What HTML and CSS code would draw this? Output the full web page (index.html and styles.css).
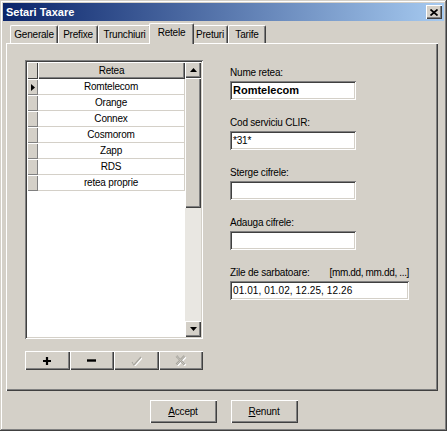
FILE: index.html
```html
<!DOCTYPE html>
<html>
<head>
<meta charset="utf-8">
<title>Setari Taxare</title>
<link rel="stylesheet" href="styles.css">
</head>
<body>
<div class="window">
  <div class="titlebar">
    <span class="title">Setari Taxare</span>
    <span class="close"><svg width="8" height="7" viewBox="0 0 8 7"><path d="M0.5 0.5 L7.5 6.5 M7.5 0.5 L0.5 6.5" stroke="#000" stroke-width="1.7" fill="none"/></svg></span>
  </div>
  <div class="tabs">
    <div class="tab w-gen">Generale</div>
    <div class="tab w-pre">Prefixe</div>
    <div class="tab w-tru">Trunchiuri</div>
    <div class="tab sel">Retele</div>
    <div class="tab w-prt">Preturi</div>
    <div class="tab w-tar">Tarife</div>
  </div>
  <div class="panel">
    <div class="leftcol">
      <div class="grid">
        <div class="gridbody">
          <div class="row header"><div class="ind"></div><div class="cell">Retea</div></div>
          <div class="row"><div class="ind"><svg width="4" height="7" viewBox="0 0 4 7"><polygon points="0,0 4,3.5 0,7" fill="#000"/></svg></div><div class="cell">Romtelecom</div></div>
          <div class="row"><div class="ind"></div><div class="cell">Orange</div></div>
          <div class="row"><div class="ind"></div><div class="cell">Connex</div></div>
          <div class="row"><div class="ind"></div><div class="cell">Cosmorom</div></div>
          <div class="row"><div class="ind"></div><div class="cell">Zapp</div></div>
          <div class="row"><div class="ind"></div><div class="cell">RDS</div></div>
          <div class="row"><div class="ind"></div><div class="cell">retea proprie</div></div>
        </div>
        <div class="scrollbar">
          <div class="sbtn"><svg width="7" height="4" viewBox="0 0 7 4"><polygon points="0,4 7,4 3.5,0" fill="#000"/></svg></div>
          <div class="thumb"></div>
          <div class="track"></div>
          <div class="sbtn"><svg width="7" height="4" viewBox="0 0 7 4"><polygon points="0,0 7,0 3.5,4" fill="#000"/></svg></div>
        </div>
      </div>
      <div class="navbar">
        <div class="nbtn"><svg width="8" height="8" viewBox="0 0 8 8"><path d="M4 0 V8 M0 4 H8" stroke="#000" stroke-width="2.2" fill="none"/></svg></div>
        <div class="nbtn"><svg width="9" height="3" viewBox="0 0 9 3"><path d="M0 1.5 H9" stroke="#000" stroke-width="2.4" fill="none"/></svg></div>
        <div class="nbtn"><svg width="12" height="11" viewBox="0 0 12 11"><path d="M2 7 L4 10 L11 2" stroke="#fff" stroke-width="1.2" fill="none" transform="translate(1,1)"/><path d="M2 7 L4 10 L11 2" stroke="#a8a69e" stroke-width="1.2" fill="none"/></svg></div>
        <div class="nbtn"><svg width="12" height="11" viewBox="0 0 12 11"><path d="M1.5 1 L9.5 9.5 M9.5 1 L1.5 9.5" stroke="#fff" stroke-width="2.4" fill="none" transform="translate(1,1)"/><path d="M1.5 1 L9.5 9.5 M9.5 1 L1.5 9.5" stroke="#a19f98" stroke-width="2.4" fill="none"/><path d="M1.5 1 L9.5 9.5 M9.5 1 L1.5 9.5" stroke="#d4d0c8" stroke-width="0.8" fill="none"/></svg></div>
      </div>
    </div>
    <div class="rightcol">
      <div class="field">
        <div class="label">Nume retea:</div>
        <div class="input bold">Romtelecom</div>
      </div>
      <div class="field">
        <div class="label">Cod serviciu CLIR:</div>
        <div class="input">*31*</div>
      </div>
      <div class="field f-shift">
        <div class="label">Sterge cifrele:</div>
        <div class="input"></div>
      </div>
      <div class="field">
        <div class="label">Adauga cifrele:</div>
        <div class="input"></div>
      </div>
      <div class="field f-shift">
        <div class="label wide"><span>Zile de sarbatoare:</span><span class="hint">[mm.dd, mm.dd, ...]</span></div>
        <div class="input wide">01.01, 01.02, 12.25, 12.26</div>
      </div>
    </div>
  </div>
  <div class="footer">
    <div class="btn"><u>A</u>ccept</div>
    <div class="btn"><u>R</u>enunt</div>
  </div>
</div>
</body>
</html>
```

FILE: styles.css
```css
html, body {
  margin: 0;
  padding: 0;
}
body {
  width: 447px;
  height: 431px;
  overflow: hidden;
  background: #d4d0c8;
  font-family: "Liberation Sans", Arial, sans-serif;
  font-size: 10px;
  letter-spacing: -0.2px;
  color: #000;
}
.window {
  width: 447px;
  height: 431px;
  box-sizing: border-box;
  padding: 3px;
  background: #d4d0c8;
  box-shadow: inset -1px -1px #404040, inset 1px 1px #d4d0c8, inset -2px -2px #808080, inset 2px 2px #fff;
  display: flex;
  flex-direction: column;
}
.titlebar {
  height: 18px;
  flex: none;
  background: linear-gradient(to right, #0a246a, #a6caf0);
  display: flex;
  align-items: center;
  justify-content: space-between;
  padding: 0 2px 0 3px;
}
.title {
  color: #fff;
  font-weight: bold;
  font-size: 11px;
  letter-spacing: 0;
}
.close {
  width: 16px;
  height: 14px;
  background: #d4d0c8;
  box-shadow: inset 1px 1px #fff, inset -1px -1px #404040, inset -2px -2px #808080;
  display: flex;
  align-items: center;
  justify-content: center;
}
.tabs {
  flex: none;
  height: 20px;
  margin-top: 2px;
  padding-left: 7px;
  display: flex;
  align-items: flex-end;
  position: relative;
  z-index: 1;
}
.tab {
  height: 18px;
  box-sizing: border-box;
  padding-top: 3px;
  text-align: center;
  background: #d4d0c8;
  border-top: 1px solid #fff;
  border-left: 1px solid #fff;
  border-right: 1px solid #404040;
  border-radius: 2px 2px 0 0;
  box-shadow: inset -1px 0 #808080;
  white-space: nowrap;
}
.w-gen { width: 48px; }
.w-pre { width: 40px; }
.w-tru { width: 53px; }
.w-prt { width: 36px; }
.w-tar { width: 38px; }
.tab.sel {
  width: 45px;
  height: 21px;
  margin: 0 -2px -1px -2px;
  padding-top: 3px;
  position: relative;
  z-index: 2;
}
.panel {
  flex: none;
  height: 348px;
  margin: 0 6px 0 3px;
  box-sizing: border-box;
  padding: 17px 0 0 19px;
  display: flex;
  box-shadow: inset 1px 1px #fff, inset -1px -1px #404040, inset -2px -2px #808080;
}
.leftcol {
  width: 178px;
  flex: none;
}
.grid {
  width: 178px;
  height: 279px;
  box-sizing: border-box;
  padding: 2px;
  background: #fff;
  display: flex;
  box-shadow: inset 1px 1px #808080, inset -1px -1px #fff, inset 2px 2px #404040, inset -2px -2px #d4d0c8;
}
.gridbody {
  flex: 1;
}
.row {
  display: flex;
  height: 16px;
}
.row.header {
  height: 17px;
}
.ind {
  width: 11px;
  flex: none;
  background: #d4d0c8;
  box-shadow: inset 1px 1px #fff, inset -1px -1px #808080;
  display: flex;
  align-items: center;
  justify-content: center;
}
.cell {
  flex: 1;
  box-sizing: border-box;
  text-align: center;
  line-height: 15px;
  border-bottom: 1px solid #d4d0c8;
  border-right: 1px solid #d4d0c8;
}
.header .cell {
  background: #d4d0c8;
  border: none;
  line-height: 17px;
  box-shadow: inset 1px 1px #fff, inset -1px -1px #404040, inset -2px -2px #808080;
}
.header .ind {
  box-shadow: inset 1px 1px #fff, inset -1px -1px #404040;
}
.scrollbar {
  width: 16px;
  flex: none;
  display: flex;
  flex-direction: column;
}
.sbtn {
  height: 16px;
  flex: none;
  background: #d4d0c8;
  box-shadow: inset 1px 1px #fff, inset -1px -1px #404040, inset -2px -2px #808080;
  display: flex;
  align-items: center;
  justify-content: center;
}
.thumb {
  height: 130px;
  flex: none;
  background: #d4d0c8;
  box-shadow: inset 1px 1px #fff, inset -1px -1px #404040, inset -2px -2px #808080;
}
.track {
  flex: 1;
  background: #e9e7e2;
}
.navbar {
  margin-top: 12px;
  display: flex;
}
.nbtn {
  width: 45px;
  height: 19px;
  background: #d4d0c8;
  box-shadow: inset 1px 1px #fff, inset -1px -1px #404040, inset -2px -2px #808080;
  display: flex;
  align-items: center;
  justify-content: center;
}
.rightcol {
  margin-left: 27px;
  padding-top: 7px;
}
.field {
  margin-bottom: 17px;
}
.field.f-shift {
  margin-top: 1px;
}
.label {
  height: 14px;
  line-height: 12px;
}
.label.wide {
  width: 179px;
  display: flex;
  justify-content: space-between;
}
.hint {
  letter-spacing: -0.35px;
}
.input {
  width: 126px;
  height: 19px;
  box-sizing: border-box;
  padding-left: 3px;
  line-height: 19px;
  background: #fff;
  white-space: nowrap;
  box-shadow: inset 1px 1px #808080, inset -1px -1px #fff, inset 2px 2px #404040, inset -2px -2px #d4d0c8;
}
.input.wide {
  width: 179px;
  letter-spacing: 0.1px;
}
.input.bold {
  font-weight: bold;
  font-size: 11px;
  letter-spacing: 0;
}
.footer {
  margin-top: 9px;
  display: flex;
  justify-content: center;
  gap: 14px;
}
.btn {
  width: 67px;
  height: 23px;
  box-sizing: border-box;
  text-align: center;
  line-height: 23px;
  background: #d4d0c8;
  box-shadow: inset 1px 1px #fff, inset -1px -1px #404040, inset -2px -2px #808080;
}
```
